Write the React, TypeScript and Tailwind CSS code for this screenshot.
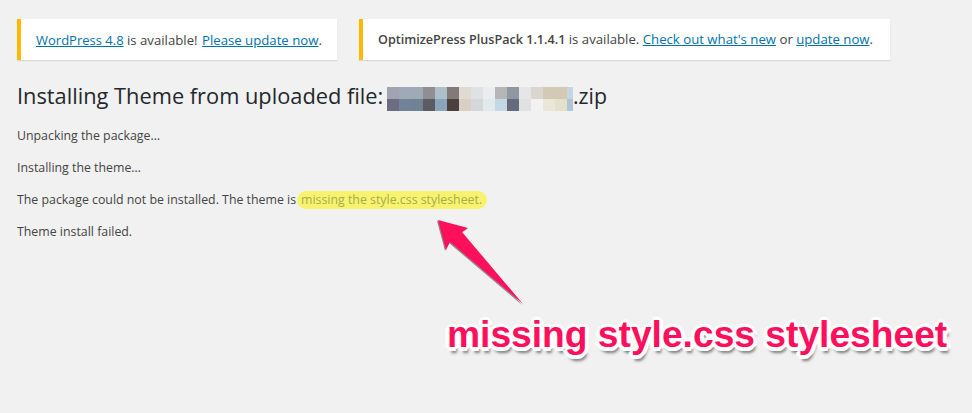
const top = ["#a2a3b1","#9fa9b8","#9dabb6","#8f8f93","#adbfca","#827a79","#e0dbd2","#dfe1e4","#e9edef","#b6b6b8","#9097a3","#e6e6e9","#dbd5cf","#d4c9b4","#d4c9b4","#c8d4df"];
const bottom = ["#6d6c82","#728399","#6f8394","#5b5b64","#8aa5bb","#4b403e","#d9cfc2","#d5d8db","#e2e9ec","#c3d8e3","#636b7c","#e0e1e3","#f2f2f2","#e9e6da","#e3e1cc","#b0c3d7"];
const widths = [12,12,12,12,12,12,12,12,12,12,12,12,12,12,12,6];

function Cells({ colors }: { colors: string[] }) {
  return (
    <div className="flex h-3">
      {colors.map((c, i) => (
        <div key={i} className="h-3" style={{ background: c, width: widths[i] }} />
      ))}
    </div>
  );
}

export default function App() {
  return (
    <div className="relative h-[413px] w-[972px] overflow-hidden bg-[#f1f1f1] pl-[17px] pt-[19px] font-['Open_Sans','Noto_Sans',sans-serif] text-[13px] leading-[20px] text-[#444]">
      <div className="flex gap-[22px] text-[13.2px]">
        <div className="flex h-[41px] w-[320px] items-center border-l-4 border-[#ffb900] bg-white pl-[15px] shadow-[0_1px_1px_rgba(0,0,0,0.1)]">
          <span>
            <a className="text-[13px] text-[#0073aa] underline">WordPress 4.8</a> is available! <a className="ml-px text-[#0073aa] underline">Please update now</a>.
          </span>
        </div>
        <div className="flex h-[41px] w-[531px] items-center border-l-4 border-[#ffb900] bg-white pl-[15px] shadow-[0_1px_1px_rgba(0,0,0,0.1)]">
          <span>
            <b className="text-[12.6px] font-semibold">OptimizePress PlusPack 1.1.4.1</b> is available. <a className="text-[#0073aa] underline">Check out what's new</a> or <a className="text-[#0073aa] underline">update now</a>.
          </span>
        </div>
      </div>
      <div className="mt-[27px] flex h-[24px] items-center text-[21.8px] leading-[24px] text-[#23282d]">
        <span className="mb-[7px] w-[370px] whitespace-nowrap">Installing Theme from uploaded file:</span>
        <div className="flex flex-col">
          <Cells colors={top} />
          <Cells colors={bottom} />
        </div>
        <span className="mb-[7px] text-[21.3px]">.zip</span>
      </div>
      <div className="mt-[15px] flex flex-col gap-[12px] text-[12.35px]">
        <p>Unpacking the package…</p>
        <p>Installing the theme…</p>
        <p>
          The package could not be installed. The theme is<span className="ml-px inline-block h-[18px] rounded-full bg-[#f7f36f] pl-[4px] pr-[5px] leading-[18px] text-[#a9ab4c]">missing the style.css stylesheet.</span>
        </p>
        <p>Theme install failed.</p>
      </div>
      <svg className="absolute left-[430px] top-[212px]" width="105" height="102" viewBox="430 212 105 102">
        <polygon points="438,220 468,228 462,232 523,304 450,242 446,250" fill="#4b4b4b" opacity="0.6" transform="translate(-1 1)" />
        <polygon points="438,220 468,228 462,232 523,304 450,242 446,250" fill="#ff0f5c" />
      </svg>
      <div className="absolute left-[447px] top-[312px] whitespace-nowrap font-['Liberation_Sans',sans-serif] text-[37.2px] font-bold leading-[44px] text-[#ff0f5c] [text-shadow:3px_0_0_#fff,-3px_0_0_#fff,0_3px_0_#fff,0_-3px_0_#fff,2px_2px_0_#fff,-2px_2px_0_#fff,2px_-2px_0_#fff,-2px_-2px_0_#fff,4px_1px_0_#fff,-4px_1px_0_#fff,1px_4px_0_#fff,-1px_4px_0_#fff,2px_6px_3px_rgba(0,0,0,0.5)]">
        missing style.css stylesheet
      </div>
    </div>
  );
}
